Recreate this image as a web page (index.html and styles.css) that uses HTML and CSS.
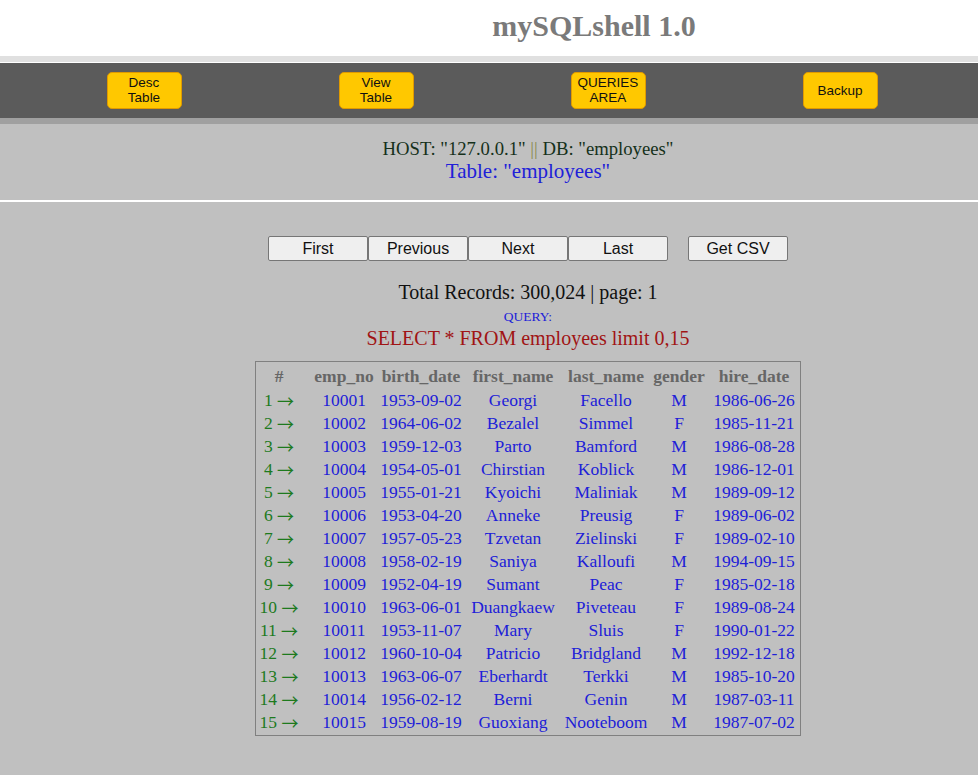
FILE: index.html
```html
<!DOCTYPE html>
<html>
<head>
<meta charset="utf-8">
<link rel="stylesheet" href="styles.css">
</head>
<body>
<header class="top">
  <h1 class="title">mySQLshell 1.0</h1>
</header>
<div class="band-light"></div>
<nav class="nav">
  <div class="nav-cell"><button class="nav-btn">Desc<br>Table</button></div>
  <div class="nav-cell"><button class="nav-btn">View<br>Table</button></div>
  <div class="nav-cell"><button class="nav-btn">QUERIES<br>AREA</button></div>
  <div class="nav-cell"><button class="nav-btn">Backup</button></div>
</nav>
<div class="band-mid"></div>
<section class="info">
  <div class="host">HOST: "127.0.0.1" <span class="sep">||</span> DB: "employees"</div>
  <div class="tname">Table: "employees"</div>
</section>
<main class="main">
  <div class="pager"><button class="pbtn">First</button><button class="pbtn">Previous</button><button class="pbtn">Next</button><button class="pbtn">Last</button><button class="pbtn csv">Get CSV</button></div>
  <div class="total">Total Records: 300,024 | page: 1</div>
  <div class="qlabel">QUERY:</div>
  <div class="query">SELECT * FROM employees limit 0,15</div>
  <table class="data">
    <thead>
      <tr><th class="c-idx">#</th><th class="c-no">emp_no</th><th class="c-bd">birth_date</th><th class="c-fn">first_name</th><th class="c-ln">last_name</th><th class="c-g">gender</th><th class="c-hd">hire_date</th></tr>
    </thead>
    <tbody>
      <tr><td class="idx">1 <span class="arr">→</span></td><td>10001</td><td>1953-09-02</td><td>Georgi</td><td>Facello</td><td>M</td><td>1986-06-26</td></tr>
      <tr><td class="idx">2 <span class="arr">→</span></td><td>10002</td><td>1964-06-02</td><td>Bezalel</td><td>Simmel</td><td>F</td><td>1985-11-21</td></tr>
      <tr><td class="idx">3 <span class="arr">→</span></td><td>10003</td><td>1959-12-03</td><td>Parto</td><td>Bamford</td><td>M</td><td>1986-08-28</td></tr>
      <tr><td class="idx">4 <span class="arr">→</span></td><td>10004</td><td>1954-05-01</td><td>Chirstian</td><td>Koblick</td><td>M</td><td>1986-12-01</td></tr>
      <tr><td class="idx">5 <span class="arr">→</span></td><td>10005</td><td>1955-01-21</td><td>Kyoichi</td><td>Maliniak</td><td>M</td><td>1989-09-12</td></tr>
      <tr><td class="idx">6 <span class="arr">→</span></td><td>10006</td><td>1953-04-20</td><td>Anneke</td><td>Preusig</td><td>F</td><td>1989-06-02</td></tr>
      <tr><td class="idx">7 <span class="arr">→</span></td><td>10007</td><td>1957-05-23</td><td>Tzvetan</td><td>Zielinski</td><td>F</td><td>1989-02-10</td></tr>
      <tr><td class="idx">8 <span class="arr">→</span></td><td>10008</td><td>1958-02-19</td><td>Saniya</td><td>Kalloufi</td><td>M</td><td>1994-09-15</td></tr>
      <tr><td class="idx">9 <span class="arr">→</span></td><td>10009</td><td>1952-04-19</td><td>Sumant</td><td>Peac</td><td>F</td><td>1985-02-18</td></tr>
      <tr><td class="idx">10 <span class="arr">→</span></td><td>10010</td><td>1963-06-01</td><td>Duangkaew</td><td>Piveteau</td><td>F</td><td>1989-08-24</td></tr>
      <tr><td class="idx">11 <span class="arr">→</span></td><td>10011</td><td>1953-11-07</td><td>Mary</td><td>Sluis</td><td>F</td><td>1990-01-22</td></tr>
      <tr><td class="idx">12 <span class="arr">→</span></td><td>10012</td><td>1960-10-04</td><td>Patricio</td><td>Bridgland</td><td>M</td><td>1992-12-18</td></tr>
      <tr><td class="idx">13 <span class="arr">→</span></td><td>10013</td><td>1963-06-07</td><td>Eberhardt</td><td>Terkki</td><td>M</td><td>1985-10-20</td></tr>
      <tr><td class="idx">14 <span class="arr">→</span></td><td>10014</td><td>1956-02-12</td><td>Berni</td><td>Genin</td><td>M</td><td>1987-03-11</td></tr>
      <tr><td class="idx">15 <span class="arr">→</span></td><td>10015</td><td>1959-08-19</td><td>Guoxiang</td><td>Nooteboom</td><td>M</td><td>1987-07-02</td></tr>
    </tbody>
  </table>
</main>
</body>
</html>
```
FILE: styles.css
```css
html, body {
  margin: 0;
  padding: 0;
}
body {
  background: #c0c0c0;
  font-family: "Liberation Serif", "Times New Roman", serif;
  min-height: 775px;
}
.top {
  background: #ffffff;
  height: 56px;
  box-sizing: border-box;
  padding-left: 210px;
  text-align: center;
}
.title {
  margin: 0;
  padding-top: 9px;
  font-size: 30px;
  line-height: 34px;
  font-weight: bold;
  color: #7a7a7a;
}
.band-light {
  height: 6px;
  background: #e0e0e0;
  border-bottom: 1px solid #ffffff;
}
.nav {
  background: #5b5b5b;
  height: 55px;
  box-sizing: border-box;
  padding: 9px 0 0 28px;
  display: flex;
}
.nav-cell {
  width: 232px;
  display: flex;
  justify-content: center;
}
.nav-btn {
  width: 75px;
  height: 37px;
  box-sizing: border-box;
  background: #ffc800;
  border: 1px solid #e09a00;
  border-radius: 5px;
  font-family: "Liberation Sans", Arial, sans-serif;
  font-size: 13.5px;
  line-height: 15px;
  color: #111;
  padding: 0 0 1px;
}
.band-mid {
  height: 6px;
  background: #a0a0a0;
}
.info {
  height: 78px;
  box-sizing: border-box;
  padding: 13px 0 0 78px;
  text-align: center;
  border-bottom: 2px solid #ffffff;
}
.host {
  font-size: 18.7px;
  line-height: 23px;
  color: #15301a;
}
.sep {
  color: #8a8a50;
}
.tname {
  font-size: 21px;
  line-height: 23px;
  color: #2020d8;
}
.main {
  display: flex;
  flex-direction: column;
  align-items: center;
  padding: 34px 0 0 78px;
}
.pager {
  display: flex;
}
.pbtn {
  width: 100px;
  height: 25px;
  box-sizing: border-box;
  background: #efefef;
  border: 1px solid #767676;
  border-radius: 2px;
  font-family: "Liberation Sans", Arial, sans-serif;
  font-size: 16px;
  color: #111;
  padding: 0;
}
.pbtn.csv {
  margin-left: 20px;
}
.total {
  margin-top: 20px;
  font-size: 20px;
  line-height: 22px;
  color: #111;
}
.qlabel {
  margin-top: 6px;
  font-size: 13.5px;
  line-height: 15px;
  color: #2020d8;
}
.query {
  margin-top: 2px;
  font-size: 20px;
  line-height: 24px;
  color: #a01414;
}
.data {
  margin-top: 11px;
  border: 1px solid #808080;
  border-spacing: 2px;
  font-size: 17.5px;
  width: 546px;
  table-layout: fixed;
}
.data th, .data td {
  box-sizing: border-box;
  padding: 1px 0;
  line-height: 19px;
  height: 21px;
  text-align: center;
  white-space: nowrap;
}
.data th {
  color: #666666;
  font-weight: bold;
  padding: 3px 0 2px;
  height: 24px;
}
.c-idx { width: 50px; }
.c-no { width: 68px; }
.c-bd { width: 82px; }
.c-fn { width: 98px; }
.c-ln { width: 84px; }
.c-g { width: 58px; }
.c-hd { width: 88px; }
.data th.c-idx, .data td.idx {
  padding-right: 8px;
}
.data td {
  color: #2020d8;
}
.data td.idx {
  color: #1d7a1d;
}
.arr {
  display: inline-block;
  font-family: "Noto Sans CJK JP", "DejaVu Sans", sans-serif;
  font-size: 17px;
  height: 19px;
  line-height: 19px;
  vertical-align: top;
}
```
